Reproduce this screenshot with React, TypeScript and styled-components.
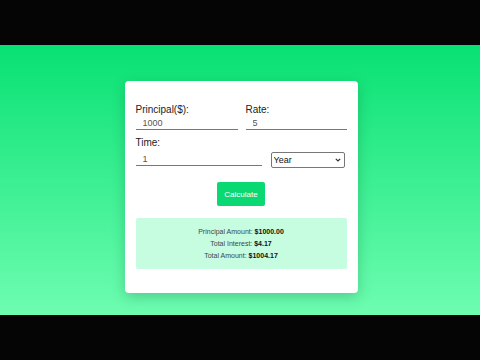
import React, { useState } from "react";
import styled, { createGlobalStyle } from "styled-components";

const GlobalStyle = createGlobalStyle`
  html, body {
    margin: 0;
    padding: 0;
    background: #000;
    font-family: "Liberation Sans", Arial, sans-serif;
  }
`;

const Frame = styled.div`
  width: 480px;
  height: 360px;
  display: flex;
  flex-direction: column;
  background: #000;
`;

const Bar = styled.div`
  height: 45px;
  flex: none;
  background: #050505;
`;

const Stage = styled.div`
  height: 270px;
  flex: none;
  background: linear-gradient(180deg, #08e173 0%, #6efdb1 100%);
  display: flex;
  justify-content: center;
  align-items: flex-start;
  padding: 36px 0 0 2px;
  box-sizing: border-box;
`;

const Card = styled.div`
  width: 233px;
  height: 212px;
  box-sizing: border-box;
  background: #fff;
  border-radius: 4px;
  box-shadow: 0 4px 14px rgba(0, 80, 40, 0.25);
  padding: 23px 11px 0 11px;
  display: flex;
  flex-direction: column;
`;

const Row = styled.div<{ $mb?: number }>`
  display: flex;
  gap: 8px;
  align-items: flex-end;
  margin-bottom: ${(p) => p.$mb ?? 0}px;
`;

const Field = styled.div<{ $w: number }>`
  width: ${(p) => p.$w}px;
  display: flex;
  flex-direction: column;
`;

const Label = styled.label<{ $gap: number }>`
  font-size: 10px;
  color: #222;
  line-height: 12px;
  margin-bottom: ${(p) => p.$gap}px;
`;

const Input = styled.input`
  border: none;
  border-bottom: 1px solid #777;
  outline: none;
  font-family: inherit;
  font-size: 9px;
  color: #555;
  padding: 0 7px 2px;
  height: 12px;
  box-sizing: border-box;
  width: 100%;
  background: transparent;
`;

const chevron =
  "url(\"data:image/svg+xml;utf8,<svg xmlns='http://www.w3.org/2000/svg' width='6' height='4' viewBox='0 0 6 4'><path d='M0.8 0.8 L3 3 L5.2 0.8' fill='none' stroke='%23333' stroke-width='1.2'/></svg>\")";

const Select = styled.select`
  appearance: none;
  -webkit-appearance: none;
  width: 74px;
  height: 16px;
  font-family: inherit;
  font-size: 9px;
  color: #111;
  border: 1px solid #777;
  border-radius: 2px;
  padding: 0 2px;
  margin-left: 1px;
  margin-bottom: -2px;
  background: #fff ${chevron} no-repeat right 3px center;
  outline: none;
`;

const Center = styled.div`
  display: flex;
  justify-content: center;
  margin-top: 16px;
`;

const Button = styled.button`
  width: 48px;
  height: 24px;
  border: none;
  border-radius: 2px;
  background: #0ad873;
  color: #fff;
  font-family: inherit;
  font-size: 8px;
  cursor: pointer;
  padding: 0;
`;

const Result = styled.div`
  margin-top: 12px;
  height: 51px;
  background: #c6fde0;
  border-radius: 2px;
  display: flex;
  flex-direction: column;
  align-items: center;
  justify-content: center;
  gap: 3px;
`;

const Line = styled.p`
  margin: 0;
  font-size: 7px;
  line-height: 9px;
  color: #444;

  b {
    color: #111;
    font-weight: bold;
  }
`;

export default function App() {
  const [principal, setPrincipal] = useState("1000");
  const [rate, setRate] = useState("5");
  const [time, setTime] = useState("1");
  const [unit, setUnit] = useState("Year");

  return (
    <>
      <GlobalStyle />
      <Frame>
        <Bar />
        <Stage>
          <Card>
            <Row $mb={7}>
              <Field $w={102}>
                <Label $gap={2}>Principal($):</Label>
                <Input value={principal} onChange={(e) => setPrincipal(e.target.value)} />
              </Field>
              <Field $w={101}>
                <Label $gap={2}>Rate:</Label>
                <Input value={rate} onChange={(e) => setRate(e.target.value)} />
              </Field>
            </Row>
            <Row>
              <Field $w={126}>
                <Label $gap={5}>Time:</Label>
                <Input value={time} onChange={(e) => setTime(e.target.value)} />
              </Field>
              <Select value={unit} onChange={(e) => setUnit(e.target.value)}>
                <option>Year</option>
                <option>Month</option>
              </Select>
            </Row>
            <Center>
              <Button>Calculate</Button>
            </Center>
            <Result>
              <Line>
                Principal Amount: <b>$1000.00</b>
              </Line>
              <Line>
                Total Interest: <b>$4.17</b>
              </Line>
              <Line>
                Total Amount: <b>$1004.17</b>
              </Line>
            </Result>
          </Card>
        </Stage>
        <Bar />
      </Frame>
    </>
  );
}
